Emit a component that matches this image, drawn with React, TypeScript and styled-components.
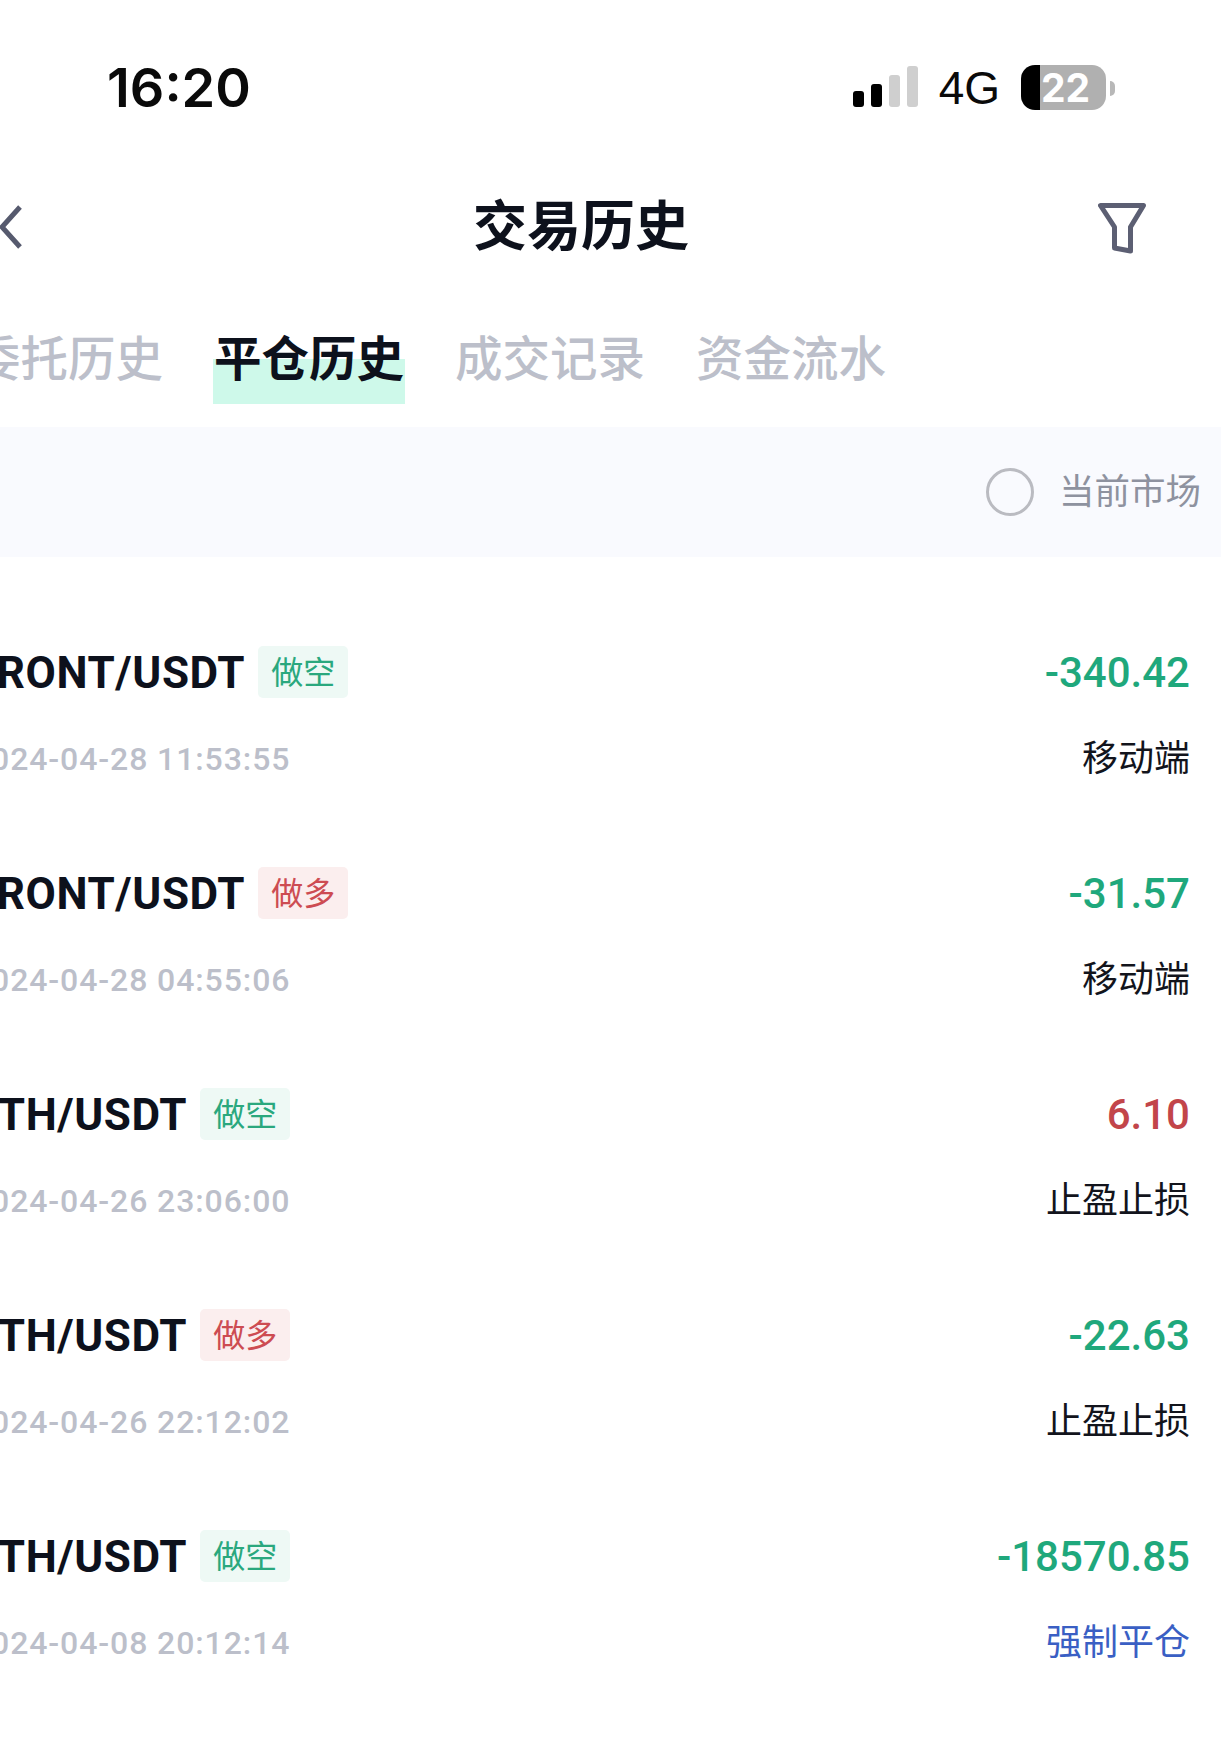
import React from 'react';
import styled, { createGlobalStyle } from 'styled-components';

const GlobalStyle = createGlobalStyle`
  html, body { margin: 0; padding: 0; background: #fff; }
  body { overflow: hidden; font-family: "Noto Sans CJK SC", "Noto Sans", sans-serif; }
`;

const Frame = styled.div`
  width: 1221px;
  height: 1747px;
  overflow: hidden;
  background: #fff;
`;
// the screenshot is cropped on the left, so the whole screen sits 28px off
const Screen = styled.div`
  width: 1249px;
  margin-left: -28px;
`;

const StatusBar = styled.div`
  height: 175px;
  display: flex;
  align-items: center;
  padding-left: 135px;
  padding-right: 115px;
  box-sizing: border-box;
`;
const Time = styled.div`
  font-family: Inter, sans-serif;
  font-weight: 600;
  font-size: 54px;
  color: #0a0a0a;
  margin-right: auto;
`;
const SignalBars = styled.div`
  display: flex;
  align-items: flex-end;
  gap: 7px;
  height: 41px;
  margin-top: -2px;
`;
const Bar = styled.div<{ $h: number; $off?: boolean }>`
  width: 11px;
  height: ${p => p.$h}px;
  border-radius: 3px;
  background: ${p => (p.$off ? '#cfcfcf' : '#000')};
`;
const Network = styled.div`
  font-family: "Liberation Sans", sans-serif;
  font-size: 46px;
  line-height: 46px;
  color: #0a0a0a;
  margin-left: 21px;
`;
const Battery = styled.div`
  position: relative;
  width: 85px;
  height: 45px;
  margin-left: 21px;
  border-radius: 14px;
  background: linear-gradient(90deg, #000 19px, #b0b0b0 19px);
  display: flex;
  align-items: center;
  justify-content: center;
  padding-left: 4px;
  box-sizing: border-box;
  font-family: Inter, sans-serif;
  font-weight: 700;
  font-size: 39px;
  color: #fff;
  &::after {
    content: '';
    position: absolute;
    right: -9px;
    top: 16px;
    width: 5px;
    height: 15px;
    border-radius: 0 8px 8px 0;
    background: #b8b8b8;
  }
`;

const Nav = styled.div`
  height: 102px;
  display: flex;
  align-items: center;
`;
const BackIcon = styled.svg`
  width: 24px;
  height: 46px;
  margin-left: 26px;
  margin-top: 2px;
  flex: none;
`;
const Title = styled.div`
  font-weight: 700;
  font-size: 54px;
  line-height: 60px;
  color: #0d111c;
  margin-left: 451px;
  margin-top: -6px;
  white-space: nowrap;
`;
const FilterIcon = styled.svg`
  width: 48px;
  height: 51px;
  margin-left: 409px;
  margin-top: 4px;
  flex: none;
`;

const Tabs = styled.div`
  display: flex;
  gap: 49px;
  margin-top: 39px;
`;
const Tab = styled.div<{ $active?: boolean }>`
  padding: 0 1px;
  font-size: 47.5px;
  line-height: 80px;
  height: 88px;
  white-space: nowrap;
  font-weight: ${p => (p.$active ? 700 : 500)};
  color: ${p => (p.$active ? '#0d111c' : '#bcbfca')};
  background: ${p => (p.$active ? 'linear-gradient(180deg, transparent 43px, #cef9ea 43px)' : 'none')};
`;

const FilterBand = styled.div`
  height: 130px;
  margin-top: 23px;
  background: #f9fafe;
  display: flex;
  align-items: center;
  justify-content: flex-end;
  padding-right: 20px;
  box-sizing: border-box;
`;
const Radio = styled.div`
  width: 48px;
  height: 48px;
  box-sizing: border-box;
  border: 3px solid #babbc1;
  border-radius: 50%;
`;
const RadioLabel = styled.div`
  margin-left: 25px;
  margin-top: -6px;
  font-size: 35.5px;
  line-height: 44px;
  color: #8e929f;
`;

const List = styled.div`
  display: flex;
  flex-direction: column;
  gap: 88px;
  padding-top: 89px;
  padding-right: 31px;
`;
const Row = styled.div`
  display: flex;
  flex-direction: column;
  gap: 41px;
`;
const Line = styled.div`
  display: flex;
  align-items: center;
  justify-content: space-between;
`;
const Pair = styled.div`
  display: flex;
  align-items: center;
  height: 52px;
`;
const Symbol = styled.div`
  font-family: Roboto, sans-serif;
  font-weight: 700;
  font-size: 44px;
  letter-spacing: 0.6px;
  margin-top: 2px;
  color: #0d111c;
`;
const Side = styled.div<{ $long?: boolean }>`
  margin-left: 13px;
  height: 52px;
  width: 90px;
  border-radius: 5px;
  text-align: center;
  font-size: 32px;
  line-height: 48px;
  background: ${p => (p.$long ? '#fbeeee' : '#eef9f5')};
  color: ${p => (p.$long ? '#cd4c52' : '#2aa87e')};
`;
const Amount = styled.div<{ $up?: boolean }>`
  font-family: Roboto, sans-serif;
  font-weight: 500;
  font-size: 42px;
  color: ${p => (p.$up ? '#c2454a' : '#1fa87c')};
`;
const Stamp = styled.div`
  height: 40px;
  line-height: 40px;
  font-family: Roboto, sans-serif;
  font-weight: 500;
  font-size: 32px;
  letter-spacing: 0.9px;
  color: #bcbfca;
  white-space: nowrap;
`;
const Source = styled.div<{ $forced?: boolean }>`
  height: 40px;
  line-height: 32px;
  font-size: 36px;
  color: ${p => (p.$forced ? '#3a5fc4' : '#12141c')};
`;

const trades = [
  { symbol: 'FRONT/USDT', long: false, amount: '-340.42', time: '2024-04-28 11:53:55', source: '移动端' },
  { symbol: 'FRONT/USDT', long: true, amount: '-31.57', time: '2024-04-28 04:55:06', source: '移动端' },
  { symbol: 'ETH/USDT', long: false, amount: '6.10', up: true, time: '2024-04-26 23:06:00', source: '止盈止损' },
  { symbol: 'ETH/USDT', long: true, amount: '-22.63', time: '2024-04-26 22:12:02', source: '止盈止损' },
  { symbol: 'ETH/USDT', long: false, amount: '-18570.85', time: '2024-04-08 20:12:14', source: '强制平仓', forced: true },
];

export default function App() {
  return (
    <Frame>
      <GlobalStyle />
      <Screen>
        <StatusBar>
          <Time>16:20</Time>
          <SignalBars>
            <Bar $h={16} />
            <Bar $h={23} />
            <Bar $h={32} $off />
            <Bar $h={41} $off />
          </SignalBars>
          <Network>4G</Network>
          <Battery>22</Battery>
        </StatusBar>
        <Nav>
          <BackIcon viewBox="0 0 24 46" fill="none">
            <path d="M22 3 L4 23 L22 43" stroke="#565a6e" strokeWidth="5" />
          </BackIcon>
          <Title>交易历史</Title>
          <FilterIcon viewBox="0 0 48 51" fill="none">
            <path d="M2.5 2.5 H45.5 L32.5 24 V48 L16.5 45 V24 Z" stroke="#5c5f73" strokeWidth="5" strokeLinejoin="round" />
          </FilterIcon>
        </Nav>
        <Tabs>
          <Tab>委托历史</Tab>
          <Tab $active>平仓历史</Tab>
          <Tab>成交记录</Tab>
          <Tab>资金流水</Tab>
        </Tabs>
        <FilterBand>
          <Radio />
          <RadioLabel>当前市场</RadioLabel>
        </FilterBand>
        <List>
          {trades.map(t => (
            <Row key={t.time}>
              <Line>
                <Pair>
                  <Symbol>{t.symbol}</Symbol>
                  <Side $long={t.long}>{t.long ? '做多' : '做空'}</Side>
                </Pair>
                <Amount $up={t.up}>{t.amount}</Amount>
              </Line>
              <Line>
                <Stamp>{t.time}</Stamp>
                <Source $forced={t.forced}>{t.source}</Source>
              </Line>
            </Row>
          ))}
        </List>
      </Screen>
    </Frame>
  );
}
